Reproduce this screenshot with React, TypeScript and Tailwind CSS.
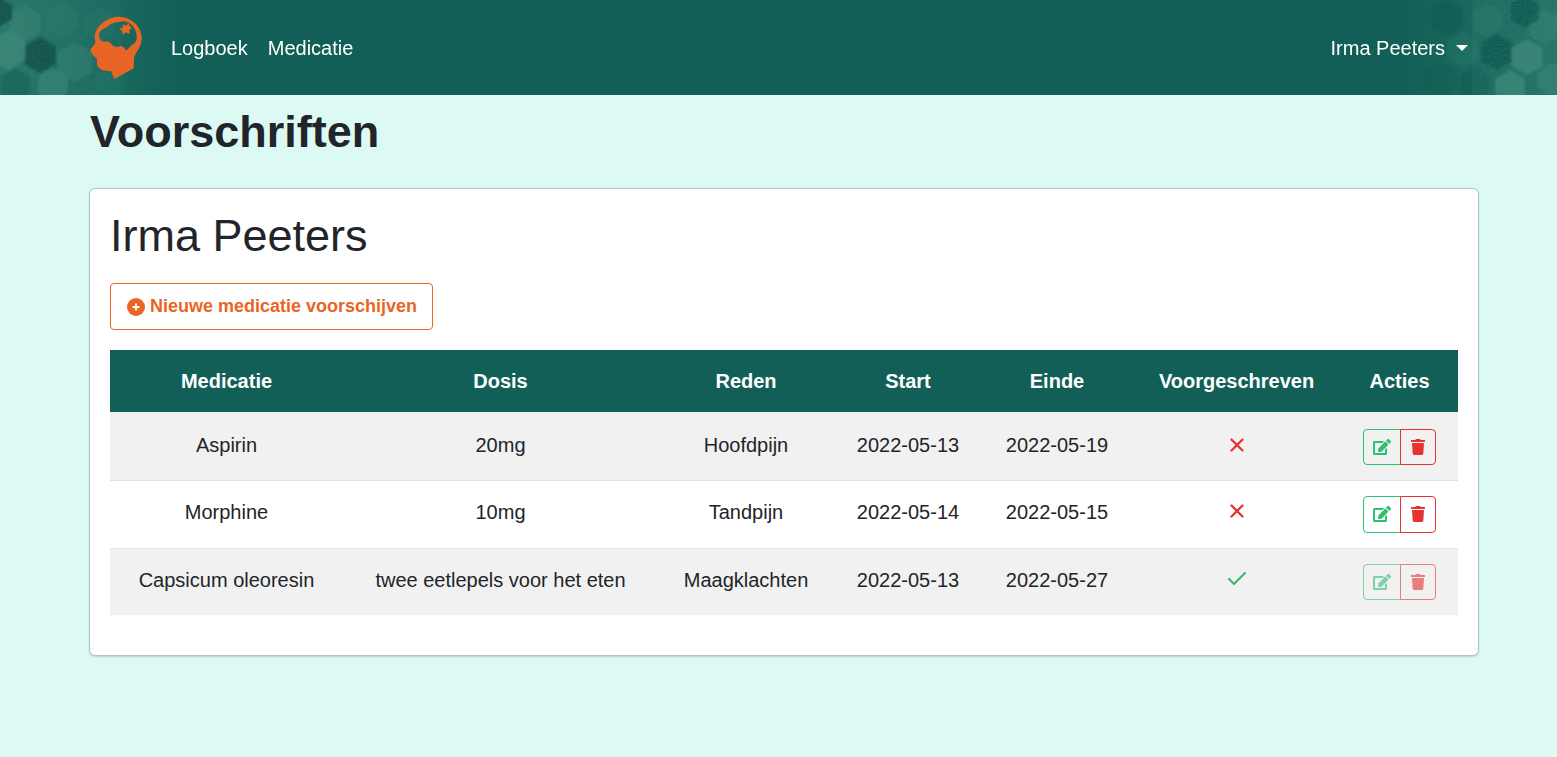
import { Check, X } from "lucide-react";

const hex = (cx: number, cy: number, r: number) =>
  [0, 60, 120, 180, 240, 300]
    .map((a) => {
      const t = ((a + 30) * Math.PI) / 180;
      return `${(cx + r * Math.cos(t)).toFixed(1)},${(cy + r * Math.sin(t)).toFixed(1)}`;
    })
    .join(" ");

type H = [number, number, number, string, number];

const leftHexes: H[] = [
  [40, 55, 18, "#0b4a43", 0.8],
  [75, 62, 20, "#3d8a78", 0.4],
  [8, 50, 20, "#4a9583", 0.5],
  [25, 23, 18, "#3d8a78", 0.45],
  [53, 85, 17, "#4a9583", 0.4],
  [0, 12, 14, "#0b4a43", 0.8],
  [62, 20, 18, "#3d8a78", 0.2],
  [15, 85, 17, "#0b4a43", 0.35],
  [100, 25, 18, "#3d8a78", 0.12],
  [112, 80, 18, "#3d8a78", 0.12],
];

const rightHexes: H[] = [
  [1447, 18, 18, "#0b4a43", 0.25],
  [1463, 50, 18, "#3d8a78", 0.22],
  [1497, 52, 18, "#0b4a43", 0.55],
  [1527, 57, 18, "#4a9583", 0.55],
  [1510, 87, 17, "#4a9583", 0.55],
  [1545, 27, 18, "#3d8a78", 0.4],
  [1487, 20, 17, "#3d8a78", 0.25],
  [1525, 12, 16, "#0b4a43", 0.55],
  [1552, 80, 17, "#3d8a78", 0.5],
  [1440, 80, 18, "#0b4a43", 0.15],
  [1475, 84, 16, "#0b4a43", 0.25],
];

function Logo() {
  return (
    <svg viewBox="0 0 210 240" className="w-[70px] h-[80px] shrink-0" aria-hidden="true">
      <path
        fill="#e96525"
        fillRule="evenodd"
        d="M30 135 L46 115 L44 90 C50 62 80 36 116 35 C153 36 184 62 185 98 C185 125 168 140 162 158 L161 190 L103 222 L93 199 L64 195 L52 183 L50 160 L40 152 Z
        M58 96 C54 82 64 72 78 68 C88 56 108 50 126 50 C148 48 168 66 170 92 C172 108 164 116 154 120 C148 128 144 134 138 136 C134 128 128 124 122 122 C114 128 102 128 94 118 C88 108 80 110 72 110 C64 110 58 104 58 96 Z"
      />
      <path
        fill="#e96525"
        d="M118 70 L128 68 L129 58 L139 62 L144 53 L150 64 L155 70 L148 75 L149 87 L138 82 L129 89 L126 78 Z"
      />
    </svg>
  );
}

function EditIcon() {
  return (
    <svg viewBox="0 0 576 512" className="w-[18px] h-[16px]" fill="#2fbf71" aria-hidden="true">
      <path d="M402.6 83.2l90.2 90.2c3.8 3.8 3.8 10 0 13.8L274.4 405.6l-92.8 10.3c-12.4 1.4-22.9-9.1-21.5-21.5l10.3-92.8L388.8 83.2c3.8-3.8 10-3.8 13.8 0zm162-22.9l-48.8-48.8c-15.2-15.2-39.9-15.2-55.2 0l-35.4 35.4c-3.8 3.8-3.8 10 0 13.8l90.2 90.2c3.8 3.8 10 3.8 13.8 0l35.4-35.4c15.2-15.3 15.2-40 0-55.2zM384 346.2V448H64V128h229.8c3.2 0 6.2-1.3 8.5-3.5l40-40c7.6-7.6 2.2-20.5-8.5-20.5H48C21.5 64 0 85.5 0 112v352c0 26.5 21.5 48 48 48h352c26.5 0 48-21.5 48-48V306.2c0-10.7-12.9-16-20.5-8.5l-40 40c-2.2 2.3-3.5 5.3-3.5 8.5z" />
    </svg>
  );
}

function TrashIcon() {
  return (
    <svg viewBox="0 0 448 512" className="w-[14px] h-[16px]" fill="#e53232" aria-hidden="true">
      <path d="M432 32H312l-9.4-18.7A24 24 0 0 0 281.1 0H166.8a23.72 23.72 0 0 0-21.4 13.3L136 32H16A16 16 0 0 0 0 48v32a16 16 0 0 0 16 16h416a16 16 0 0 0 16-16V48a16 16 0 0 0-16-16zM53.2 467a48 48 0 0 0 47.9 45h245.8a48 48 0 0 0 47.9-45L416 128H32z" />
    </svg>
  );
}

const rows = [
  { med: "Aspirin", dose: "20mg", why: "Hoofdpijn", start: "2022-05-13", end: "2022-05-19", ok: false, h: "h-[68px]", cell: "pb-0.5", mark: "pb-0.5", act: "pt-[3px]", btn: "h-[36px]" },
  { med: "Morphine", dose: "10mg", why: "Tandpijn", start: "2022-05-14", end: "2022-05-15", ok: false, h: "h-[68px]", cell: "pb-1", mark: "pb-1.5", act: "", btn: "h-[37px]" },
  { med: "Capsicum oleoresin", dose: "twee eetlepels voor het eten", why: "Maagklachten", start: "2022-05-13", end: "2022-05-27", ok: true, h: "h-[67px]", cell: "pb-1", mark: "pb-1.5", act: "pt-px", btn: "h-[36px]" },
];

const heads = ["Medicatie", "Dosis", "Reden", "Start", "Einde", "Voorgeschreven", "Acties"];

export default function App() {
  return (
    <div className="min-h-[757px] bg-[#dcf9f4] text-[#212529] font-['Liberation_Sans',Arial,sans-serif] text-[20px]">
      <nav className="relative h-[95px] overflow-hidden bg-[#125f57] text-white">
        <svg className="absolute inset-0 w-full h-full" viewBox="0 0 1557 95" preserveAspectRatio="none" aria-hidden="true">
          <defs>
            <linearGradient id="fadeL" x1="0" x2="1" y1="0" y2="0">
              <stop offset="0" stopColor="#2f8070" stopOpacity="0.75" />
              <stop offset="1" stopColor="#2f8070" stopOpacity="0" />
            </linearGradient>
            <linearGradient id="fadeR" x1="0" x2="1" y1="0" y2="0">
              <stop offset="0" stopColor="#2f8070" stopOpacity="0" />
              <stop offset="1" stopColor="#2f8070" stopOpacity="0.6" />
            </linearGradient>
            <filter id="soft">
              <feGaussianBlur stdDeviation="0.8" />
            </filter>
            <filter id="grain">
              <feTurbulence type="fractalNoise" baseFrequency="0.9" numOctaves="2" seed="4" />
              <feColorMatrix type="matrix" values="0 0 0 0 0.05  0 0 0 0 0.25  0 0 0 0 0.22  0 0 0 1.6 -0.55" />
            </filter>
          </defs>
          <rect x="0" y="0" width="180" height="95" fill="url(#fadeL)" />
          <rect x="1400" y="0" width="157" height="95" fill="url(#fadeR)" />
          <g filter="url(#soft)">
            {[...leftHexes, ...rightHexes].map(([x, y, r, f, o]) => (
              <polygon key={`${x}-${y}`} points={hex(x, y, r)} fill={f} opacity={o} />
            ))}
          </g>
          <rect x="0" y="0" width="110" height="95" filter="url(#grain)" opacity="0.45" />
          <rect x="1480" y="0" width="77" height="95" filter="url(#grain)" opacity="0.6" />
        </svg>
        <div className="relative ml-[90px] flex h-full w-[1388px] items-center">
          <div className="-ml-[10px] -mt-[5px]">
            <Logo />
          </div>
          <a className="ml-[21px] leading-[30px]">Logboek</a>
          <a className="ml-5 leading-[30px]">Medicatie</a>
          <button className="ml-auto mr-[10px] flex items-center leading-[30px]">
            Irma Peeters
            <span className="ml-[11px] mt-px h-0 w-0 border-x-[6px] border-t-[6px] border-x-transparent border-t-white" />
          </button>
        </div>
      </nav>

      <main className="ml-[90px] w-[1388px]">
        <h1 className="m-0 pt-[10px] text-[45px] font-bold leading-[54px]">Voorschriften</h1>
        <section className="-ml-px mt-[29px] h-[468px] w-[1390px] rounded-[6px] border border-[#b3c5c1] bg-white px-5 pt-[19px] shadow-[0_1px_2px_rgba(0,0,0,0.15)]">
          <h2 className="text-[45px] font-normal leading-[56px]">Irma Peeters</h2>
          <button className="mt-[19px] flex h-[47px] items-center rounded-[4px] border border-[#e96525] pl-4 pr-[15px] text-[18px] font-bold text-[#e96525]">
            <span className="mr-[5px] flex h-[18px] w-[18px] items-center justify-center rounded-full bg-[#e96525] text-white">
              <svg viewBox="0 0 10 10" className="w-[10px] h-[10px]" aria-hidden="true">
                <path d="M5 1.5v7M1.5 5h7" stroke="#fff" strokeWidth="1.8" />
              </svg>
            </span>
            Nieuwe medicatie voorschijven
          </button>
          <table className="mt-5 w-[1348px] table-fixed border-collapse text-center">
            <colgroup>
              <col className="w-[233px]" />
              <col className="w-[315px]" />
              <col className="w-[176px]" />
              <col className="w-[148px]" />
              <col className="w-[150px]" />
              <col className="w-[209px]" />
              <col className="w-[117px]" />
            </colgroup>
            <thead>
              <tr className="h-[62px] bg-[#125f57] text-white">
                {heads.map((h) => (
                  <th key={h} className="font-bold">{h}</th>
                ))}
              </tr>
            </thead>
            <tbody>
              {rows.map((r, i) => (
                <tr
                  key={r.med}
                  className={`${r.h} ${i % 2 === 0 ? "bg-[#f1f1f1]" : "bg-white"} ${i < 2 ? "border-b border-[#dee2e6]" : ""}`}
                >
                  <td className={r.cell}>{r.med}</td>
                  <td className={r.cell}>{r.dose}</td>
                  <td className={r.cell}>{r.why}</td>
                  <td className={r.cell}>{r.start}</td>
                  <td className={r.cell}>{r.end}</td>
                  <td className={r.mark}>
                    <div className="flex justify-center">
                      {r.ok ? (
                        <Check size={24} strokeWidth={2.2} className="text-[#3cb96e]" />
                      ) : (
                        <X size={22} strokeWidth={2.5} className="text-[#e53232]" />
                      )}
                    </div>
                  </td>
                  <td className={r.act}>
                    <div className={`flex justify-center ${r.ok ? "opacity-60" : ""}`}>
                      <span className={`flex ${r.btn} w-[38px] items-center justify-center rounded-l-[4px] border border-[#2fbf71]`}>
                        <EditIcon />
                      </span>
                      <span className={`-ml-px flex ${r.btn} w-[36px] items-center justify-center rounded-r-[4px] border border-[#e53232]`}>
                        <TrashIcon />
                      </span>
                    </div>
                  </td>
                </tr>
              ))}
            </tbody>
          </table>
        </section>
      </main>
    </div>
  );
}
